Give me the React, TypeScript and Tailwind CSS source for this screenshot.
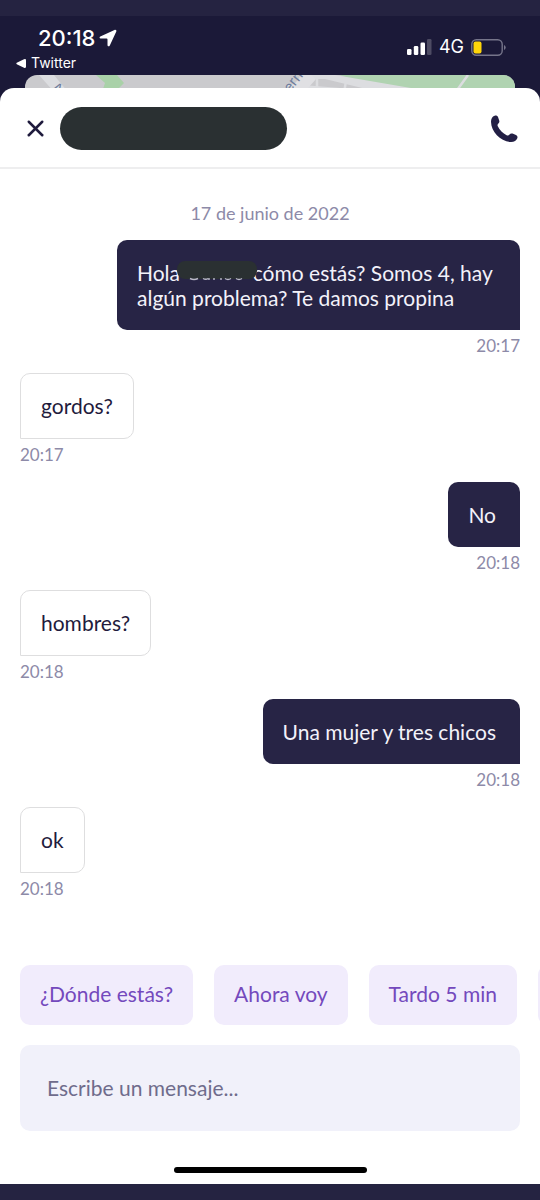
import { X } from "lucide-react";

type Message = { text: React.ReactNode; time: string; mine?: boolean };

const HiddenName = () => (
  <span className="relative inline-block h-4 w-[62px]">
    <span className="absolute -left-2 -top-1 h-[18px] w-[80px] rounded-lg bg-[#2a3032]" />
    <svg className="absolute left-1 top-3 h-1 w-[56px]" viewBox="0 0 56 4" fill="none" stroke="#b9b8c8" strokeWidth="1.4" aria-hidden="true">
      <path d="M1 1.5q4 2 8 0M14 1.5q3 1.6 5 0M20 1v2M25 1v2M32 1v2M36 1.5q3 2 6 0M47 1.5q3 2 6 0" />
    </svg>
  </span>
);

const messages: Message[] = [
  {
    text: (
      <>
        Hola <HiddenName /> cómo estás? Somos 4, hay algún problema? Te damos propina
      </>
    ),
    time: "20:17",
    mine: true,
  },
  { text: "gordos?", time: "20:17" },
  { text: "No", time: "20:18", mine: true },
  { text: "hombres?", time: "20:18" },
  { text: "Una mujer y tres chicos", time: "20:18", mine: true },
  { text: "ok", time: "20:18" },
];

const replies = ["¿Dónde estás?", "Ahora voy", "Tardo 5 min"];

const StatusBar = () => (
  <div className="flex h-[59px] items-start justify-between bg-[#1b1938] pl-4 pr-[34px] font-['Inter',sans-serif] text-white">
    <div className="pt-2">
      <div className="flex h-7 items-center gap-1 pl-[22px] text-[22px] font-medium">
        20:18
        <svg className="h-[18px] w-[18px]" viewBox="0 0 18 18" fill="currentColor" aria-hidden="true">
          <path d="M15.500.9 1.300 7.400C.2 8 .4 9.500 1.600 9.500H7.600c.6 0 .9.300.9.900v5.600c0 1.500 1.700 1.700 2.300.4L17.300 2.500C17.800 1.300 16.700.4 15.500.9Z" />
        </svg>
      </div>
      <a href="#" className="flex h-5 items-center gap-[5px] pt-[2px] text-sm">
        <svg className="h-[9px] w-[10px]" viewBox="0 0 10 9" fill="currentColor" aria-hidden="true">
          <path d="M.8 3.800 8 .2Q10-.5 10 1.200v6.600q0 1.700-2 1L.8 5.200Q-.2 4.500.8 3.800Z" />
        </svg>
        Twitter
      </a>
    </div>
    <div className="flex items-center gap-[7px] pt-[22px] text-lg leading-none">
      <svg className="h-4 w-[25px]" viewBox="0 0 25 16" fill="currentColor" aria-hidden="true">
        <rect y="10" width="4.500" height="6" rx="1.300" />
        <rect x="6.800" y="7" width="4.500" height="9" rx="1.300" />
        <rect x="13.500" y="3.500" width="4.500" height="12.500" rx="1.300" />
        <rect x="20" width="4.500" height="16" rx="1.300" opacity=".22" />
      </svg>
      4G
      <svg className="h-[17px] w-[35px]" viewBox="0 0 35 17" aria-hidden="true">
        <rect x=".8" y=".8" width="30.400" height="15.400" rx="4.500" fill="none" stroke="#76758a" strokeWidth="1.400" />
        <rect x="2.500" y="2.500" width="8" height="12" rx="2" fill="#ffd60a" />
        <path d="M33 6q1.700.6 1.700 2.500T33 11Z" fill="#76758a" />
      </svg>
    </div>
  </div>
);

const MapPeek = () => (
  <div className="bg-[#1b1938] px-[25px]">
    <svg className="block h-[27px] w-full rounded-t-xl" viewBox="0 0 490 27" preserveAspectRatio="none" aria-hidden="true">
      <rect width="490" height="27" fill="#cacacd" />
      <path d="M14 0h15l22 27H38Z" fill="#dcdde0" />
      <path d="M71 0h21l7 8-6 6H78l2-6Z" fill="#a9d1a8" />
      <path d="M315 0h175v27H390Z" fill="#b0d3b1" />
      <path d="M275 0h35l105 18v9h-20L300 4H274Z" fill="#dcdde0" />
      <path d="m443 0-13 18M292 3v20M321 6l-3 18M262 10l100 8" stroke="#dcdde0" strokeWidth="2.500" />
      <path d="m262 27 24-27" stroke="#e0e0e3" strokeWidth="13" />
      <text x="265" y="18" transform="rotate(-52 265 18)" fontSize="14" fill="#6d7c9c" fontFamily="Inter, sans-serif">ern</text>
      <text x="26" y="15" transform="rotate(32 26 15)" fontSize="14" fill="#6d7c9c" fontFamily="Inter, sans-serif">A</text>
    </svg>
  </div>
);

const Header = () => (
  <header className="flex h-[81px] items-center border-b-2 border-[#eeeeef] pl-[22px] pr-5 pt-[2px]">
    <button type="button" aria-label="Cerrar" className="text-[#1f1b3d]">
      <X size={27} strokeWidth={2.2} />
    </button>
    <div className="ml-[11px] h-[43px] w-[227px] rounded-full bg-[#2a3032]" />
    <button type="button" aria-label="Llamar" className="ml-auto text-[#231f45]">
      <svg className="h-8 w-8" viewBox="0 0 32 32" fill="currentColor" aria-hidden="true">
        <path d="M6.600 2.800C4.200 3.600 3 5.800 3 8.800 3.200 19 12.600 28.700 22.800 29c3.200.1 5.600-1.300 6.500-3.800.5-1.400 0-2.700-1.300-3.300l-3.500-1.300c-1.200-.4-2.300-.1-3 .9-.7 1.100-1.700 1.300-2.900.7-3.700-1.800-7-5.200-8.800-8.900-.5-1.100-.3-2 .6-2.800 1-.8 1.200-1.900.8-3L10 4.100C9.400 2.800 8.100 2.300 6.600 2.800Z" />
      </svg>
    </button>
  </header>
);

const Bubble = ({ text, time, mine }: Message) => (
  <li className={mine ? "flex flex-col items-end" : "flex flex-col items-start"}>
    <p
      className={
        mine
          ? "max-w-[403px] rounded-[10px] rounded-br-none bg-[#272445] py-5 pl-5 pr-6 text-[21px] leading-[25px] text-[#f3f2fa]"
          : "rounded-[10px] rounded-bl-none border border-[#dededf] p-5 text-[21px] leading-[24px] text-[#1f1b3d]"
      }
    >
      {text}
    </p>
    <time className="mt-1 text-[17px] leading-6 text-[#8d8aa8]">{time}</time>
  </li>
);

export default function App() {
  return (
    <div className="flex min-h-screen flex-col overflow-hidden border-y-16 border-[#252341] bg-[#1b1938] font-['Lato',sans-serif]">
      <StatusBar />
      <MapPeek />
      <div className="-mt-[14px] flex flex-1 flex-col rounded-t-[14px] bg-white">
        <Header />
        <main className="flex-1 px-5 pt-8">
          <p className="mb-[15px] text-center text-lg leading-6 text-[#8d8aa8]">17 de junio de 2022</p>
          <ul className="flex flex-col gap-[15px]">
            {messages.map((message, i) => (
              <Bubble key={i} {...message} />
            ))}
          </ul>
        </main>
        <div className="flex gap-[21px] overflow-hidden pl-5">
          {replies.map((reply) => (
            <button key={reply} type="button" className="h-[60px] shrink-0 rounded-[10px] bg-[#f1ecfc] px-5 pb-[2px] text-[21px] text-[#7449bd]">
              {reply}
            </button>
          ))}
          <span className="h-[60px] w-20 shrink-0 rounded-[10px] bg-[#f1ecfc]" />
        </div>
        <div className="px-5 pt-5">
          <input
            type="text"
            aria-label="Escribe un mensaje"
            placeholder="Escribe un mensaje..."
            className="h-[86px] w-full rounded-[10px] bg-[#f1f1fa] px-[27px] pb-[2px] text-[21px] outline-none placeholder:text-[#6f6c8c]"
          />
        </div>
        <div className="mx-auto mb-[11px] mt-9 h-[6px] w-[193px] rounded-full bg-black" />
      </div>
    </div>
  );
}
